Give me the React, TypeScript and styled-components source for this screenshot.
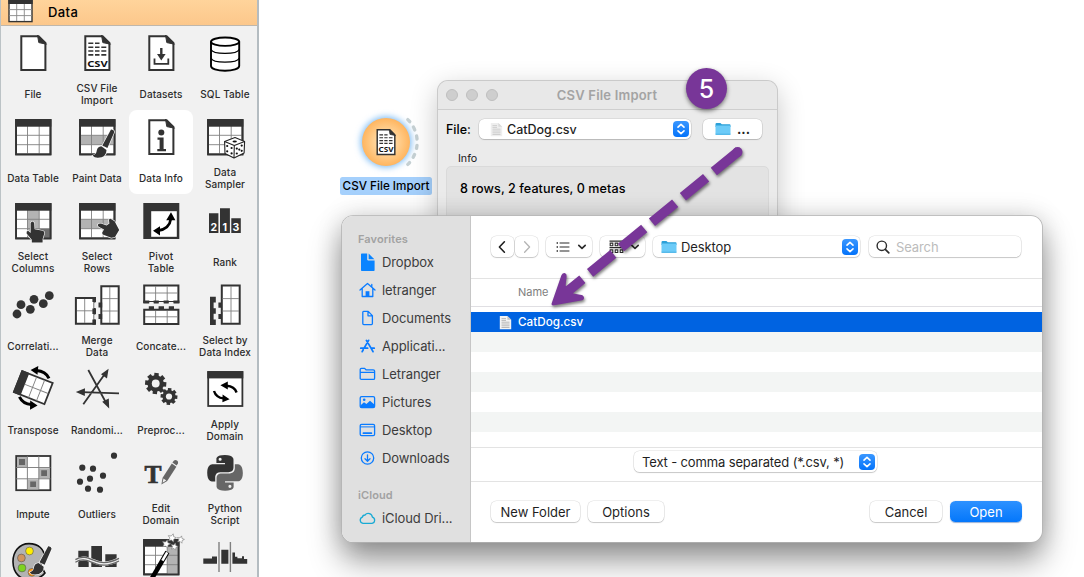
import React from "react";
import styled, { createGlobalStyle, css } from "styled-components";

const INK = "#333333";
const PURPLE = "#783698";
const BLUE = "#0a7bff";

const GlobalStyle = createGlobalStyle`
  *, *::before, *::after { box-sizing: border-box; }
  html, body { margin: 0; padding: 0; background: #ffffff; }
  body {
    font-family: Inter, "Liberation Sans", sans-serif;
    color: #1c1c1c;
    overflow: hidden;
  }
  svg { display: block; flex: none; }
`;

/* ---------- page ---------- */

const Page = styled.div`
  display: flex;
  width: 1084px;
  height: 577px;
  overflow: hidden;
  background: #ffffff;
`;

const Toolbox = styled.aside`
  flex: none;
  width: 259px;
  height: 577px;
  overflow: hidden;
  background: #f1f1f1;
  border-left: 1px solid #bcc3c6;
  border-right: 2px solid #b4bcc1;
`;

const ToolboxHeader = styled.header`
  display: flex;
  align-items: center;
  height: 26px;
  padding: 0 0 2px 7px;
  gap: 15px;
  background: linear-gradient(#ffd49b, #fcc78b);
  border-bottom: 1px solid #bfb7ac;
  font-size: 13px;
  font-weight: 500;
  letter-spacing: 0.4px;
  color: #000000;
`;

const HeaderIcon = styled.svg`
  width: 25px;
  height: 26px;
  margin-top: 1px;
`;

const TileGrid = styled.div`
  display: grid;
  grid-template-columns: repeat(4, 64px);
  grid-auto-rows: 84px;
`;

const Tile = styled.div<{ $active?: boolean }>`
  display: flex;
  flex-direction: column;
  align-items: center;
  border-radius: 8px;
  background: ${(p) => (p.$active ? "#ffffff" : "transparent")};
`;

const TileIcon = styled.svg`
  flex: none;
  width: 64px;
  height: 52px;
  overflow: visible;
`;

const TileLabel = styled.div`
  display: flex;
  align-items: center;
  justify-content: center;
  height: 32px;
  font-size: 10px;
  font-weight: 500;
  line-height: 12px;
  letter-spacing: 0.1px;
  text-align: center;
  white-space: pre;
  color: #2c2c2c;
`;

/* ---------- canvas ---------- */

const Canvas = styled.main`
  position: relative;
  flex: 1;
  overflow: hidden;
`;

const NodeBox = styled.div`
  position: absolute;
  left: 81px;
  top: 112px;
  width: 92px;
  display: flex;
  flex-direction: column;
  align-items: center;
  gap: 5px;
`;

const NodeArt = styled.svg`
  width: 92px;
  height: 60px;
  overflow: visible;
`;

const NodeLabel = styled.div`
  width: 92px;
  height: 18px;
  border-radius: 2.5px;
  background: #a5d0fc;
  font-size: 11.7px;
  font-weight: 500;
  line-height: 19px;
  text-align: center;
  white-space: nowrap;
  color: #000000;
`;

/* ---------- shared controls ---------- */

const Control = styled.div<{ $w: number; $h?: number; $primary?: boolean; $pad?: number; $center?: boolean }>`
  display: flex;
  flex: none;
  align-items: center;
  width: ${(p) => p.$w}px;
  height: ${(p) => p.$h ?? 21}px;
  padding: 0 ${(p) => p.$pad ?? 0}px;
  border-radius: 5.5px;
  background: #ffffff;
  box-shadow: 0 0 0 0.6px rgba(0, 0, 0, 0.13), 0 1px 1px rgba(0, 0, 0, 0.17);
  font-size: 13px;
  white-space: nowrap;
  color: #1f1f1f;
  ${(p) => p.$center && css`justify-content: center;`}
  ${(p) =>
    p.$primary &&
    css`
      background: linear-gradient(#2d91ff, #0477fb);
      box-shadow: 0 0.5px 1px rgba(0, 60, 150, 0.4);
      color: #ffffff;
    `}
`;

const ControlText = styled.span<{ $ls?: number; $weight?: number; $size?: number; $hint?: boolean }>`
  flex: 1;
  font-size: ${(p) => p.$size ?? 13}px;
  font-weight: ${(p) => p.$weight ?? 400};
  letter-spacing: ${(p) => p.$ls ?? 0}px;
  ${(p) => p.$hint && css`color: #bcbcbc;`}
`;

const StepperBox = styled.span`
  display: flex;
  flex: none;
  align-items: center;
  justify-content: center;
  width: 16px;
  height: 16px;
  border-radius: 4px;
  background: linear-gradient(#3a97ff, #0473fa);
`;

const Stepper = () => (
  <StepperBox>
    <svg width="16" height="16" viewBox="0 0 16 16" fill="none" stroke="#fff" strokeWidth="1.6" strokeLinecap="round" strokeLinejoin="round">
      <path d="M5 6.2 8 3.4l3 2.8M5 9.8l3 2.8 3-2.8" />
    </svg>
  </StepperBox>
);

const FolderArt = () => (
  <svg width="16" height="14" viewBox="0 0 16 14">
    <path d="M0.5 2.2Q0.5 1 1.6 1H5.4L6.8 2.3H14.6Q15.5 2.3 15.5 3.2V5H.5Z" fill="#2ba0d8" />
    <rect x="0.5" y="3.6" width="15" height="9.4" rx="0.9" fill="#6ccbf8" />
    <path d="M.5 12.2h15" stroke="#4bb0e2" strokeWidth="0.9" />
  </svg>
);

const PaperArt = ({ dim }: { dim?: boolean }) => (
  <svg width="13" height="15" viewBox="0 0 13 15" opacity={dim ? 0.65 : 1}>
    <path d="M.8 1H8.4L12.2 4.8V14.2H.8Z" fill={dim ? "#e6e6e6" : "#f4f4f4"} />
    <path d="M8.4 1V4.8H12.2Z" fill="#c5c5c5" />
    <path d="M2.5 3.6H7M2.5 5.4H7M2.5 7.2h8M2.5 9h8M2.5 10.8h8M2.5 12.5h8" stroke="#a9a9a9" strokeWidth="0.8" />
  </svg>
);

/* ---------- CSV import window ---------- */

const ImportWindow = styled.section`
  position: absolute;
  left: 179px;
  top: 81px;
  width: 339px;
  height: 300px;
  border-radius: 10px;
  background: #ebebeb;
  box-shadow: 0 0 0 1px #cacaca, 0 8px 28px rgba(0, 0, 0, 0.24);
`;

const TitleBar = styled.div`
  display: flex;
  align-items: center;
  height: 29px;
  padding: 0 8px;
  border-bottom: 1px solid #cecece;
  border-radius: 10px 10px 0 0;
  background: #e8e8e8;
`;

const Lights = styled.div`
  display: flex;
  flex: none;
  gap: 8px;
`;

const Light = styled.i`
  width: 12px;
  height: 12px;
  border: 1px solid #bfbfbf;
  border-radius: 50%;
  background: #cecece;
`;

const WindowTitle = styled.div`
  flex: 1;
  padding-right: 53px;
  font-size: 13px;
  font-weight: 600;
  letter-spacing: 0.2px;
  line-height: 18px;
  text-align: center;
  white-space: nowrap;
  color: #a3a3a3;
`;

const FileRow = styled.div`
  display: flex;
  align-items: center;
  gap: 8px;
  height: 20px;
  margin: 9px 15px 0 8px;
  font-size: 12.5px;
  font-weight: 500;
  color: #000000;
`;

const FileLabel = styled.span`
  width: 25px;
  white-space: nowrap;
`;

const Dots = styled.span`
  padding-left: 6px;
  font-weight: 700;
`;

const GroupTitle = styled.div`
  margin: 12px 0 0 20px;
  height: 15px;
  font-size: 10.7px;
  line-height: 15px;
  color: #1a1a1a;
`;

const GroupBox = styled.div`
  margin: 0 8px 0 8px;
  height: 180px;
  padding: 14px 0 0 13px;
  border: 1px solid #dadada;
  border-radius: 5px;
  background: #e3e3e3;
  font-size: 12.6px;
  font-weight: 500;
  line-height: 16px;
  letter-spacing: 0.06px;
  color: #000000;
`;

/* ---------- open dialog ---------- */

const OpenDialog = styled.section`
  position: absolute;
  left: 83px;
  top: 216px;
  display: flex;
  width: 700px;
  height: 326px;
  border-radius: 11px;
  background: #ffffff;
  box-shadow: 0 0 0 0.8px #b4b4b4, 0 18px 32px rgba(0, 0, 0, 0.42), 0 0 26px rgba(0, 0, 0, 0.15);
`;

const Places = styled.nav`
  flex: none;
  width: 129px;
  padding: 15px 0 0 16px;
  border-right: 1px solid #c6c6c6;
  border-radius: 11px 0 0 11px;
  background: #e0e0e0;
`;

const PlacesTitle = styled.div<{ $gap?: number }>`
  height: 17px;
  margin-top: ${(p) => p.$gap ?? 0}px;
  font-size: 11px;
  font-weight: 600;
  line-height: 17px;
  letter-spacing: 0.1px;
  color: #a2a2a2;
`;

const Place = styled.div`
  display: flex;
  align-items: center;
  gap: 6px;
  height: 28px;
  font-size: 13px;
  letter-spacing: -0.1px;
  white-space: nowrap;
  color: #3c3c3c;
`;

const PlaceIcon = styled.svg`
  width: 18px;
  height: 18px;
`;

const Browser = styled.div`
  display: flex;
  flex: 1;
  flex-direction: column;
  min-width: 0;
`;

const Toolbar = styled.div`
  display: flex;
  flex: none;
  height: 63px;
  padding: 20px 0 0 20px;
  border-bottom: 1px solid #e3e3e3;
`;

const Slot = styled.div<{ $ml: number }>`
  margin-left: ${(p) => p.$ml}px;
`;

const ColumnHead = styled.div`
  flex: none;
  height: 28px;
  padding: 0 0 0 47px;
  border-bottom: 1px solid #e0dfe3;
  font-size: 11px;
  line-height: 27px;
  color: #7e7e7e;
`;

const FileList = styled.div`
  flex: none;
  height: 141px;
  padding-top: 5px;
  border-bottom: 1px solid #e3e3e3;
`;

const ListRow = styled.div<{ $tone: "selected" | "odd" | "even" }>`
  display: flex;
  align-items: center;
  gap: 6px;
  height: 20px;
  padding-left: 28px;
  font-size: 11.7px;
  font-weight: 500;
  color: #ffffff;
  background: ${(p) => ({ selected: "#0063e1", odd: "#f3f5f4", even: "#ffffff" })[p.$tone]};
`;

const FilterBar = styled.div`
  display: flex;
  flex: none;
  align-items: flex-start;
  height: 34px;
  padding: 3px 0 0 163px;
  border-bottom: 1px solid #e3e3e3;
`;

const Footer = styled.div`
  display: flex;
  padding: 19px 20px 0 20px;
`;

const Spacer = styled.div`
  flex: 1;
`;

/* ---------- annotations ---------- */

const StepBadge = styled.div`
  position: absolute;
  left: 427px;
  top: 68px;
  width: 41px;
  height: 41px;
  border-radius: 50%;
  background: ${PURPLE};
  box-shadow: 0 2px 4px rgba(0, 0, 0, 0.5);
  font-size: 25px;
  font-weight: 500;
  line-height: 42px;
  text-align: center;
  color: #ffffff;
`;

const ArrowLayer = styled.svg`
  position: absolute;
  left: 0;
  top: 0;
  filter: drop-shadow(1px 2px 1.5px rgba(0, 0, 0, 0.5));
`;

/* ---------- toolbox icons: each is drawn in a 64 x 52 tile area ---------- */

const Doc = ({ children }: { children?: React.ReactNode }) => (
  <>
    <path d="M20.3 10.2H37.6L44.4 17V44H20.3Z" fill="#fff" stroke={INK} strokeWidth="2" />
    <path d="M36.5 9.2 45.4 18.2 37.8 16.6Z" fill={INK} stroke={INK} strokeWidth="1" />
    {children}
  </>
);

const CsvLines = () => (
  <>
    <path
      d="M23.3 17.3h5M30 17.3h4.5M23.3 21.2h5M30 21.2h4.5M36.3 21.2h5M23.3 25h5M30 25h4.5M36.3 25h5M23.3 28.9h5M30 28.9h4.5M36.3 28.9h5"
      stroke={INK}
      strokeWidth="1.6"
    />
    <text x="32.4" y="41.3" fontFamily="'Noto Sans', sans-serif" fontSize="9.4" fontWeight="700" textAnchor="middle" textLength="20.5" lengthAdjust="spacingAndGlyphs" fill="#111">
      CSV
    </text>
  </>
);

const Table = ({ children }: { children?: React.ReactNode }) => (
  <>
    <rect x="15.1" y="10" width="34.4" height="34.4" fill="#fff" stroke={INK} strokeWidth="1.8" />
    {children}
    <path d="M26.5 16V44M38.2 16V44M15 25.3H49.5M15 34.7H49.5" stroke="#808080" strokeWidth="0.9" />
    <rect x="14.3" y="9.2" width="36" height="7.5" fill={INK} />
    <rect x="15.1" y="10" width="34.4" height="34.4" fill="none" stroke={INK} strokeWidth="1.8" />
  </>
);

const Brush = ({ dx = 0, dy = 0 }: { dx?: number; dy?: number }) => (
  <g transform={`translate(${dx} ${dy})`} stroke="#fff" strokeWidth="1.2" paintOrder="stroke" fill={INK}>
    <path d="M46 19.5Q49 19.3 49.4 22L42.4 38 37.3 35.4Z" />
    <path d="M36.3 36.3 41.5 40Q41.5 47.5 33 47.8 29.5 48 27.5 45.6 31.5 44.5 31.8 40.5 32.5 36.6 36.3 36.3Z" />
  </g>
);

const Gear = ({ cx, cy, r }: { cx: number; cy: number; r: number }) => (
  <g transform={`translate(${cx} ${cy})`}>
    {[0, 45, 90, 135].map((a) => (
      <rect key={a} x={-r * 0.21} y={-r} width={r * 0.42} height={r * 2} fill={INK} transform={`rotate(${a + 5})`} />
    ))}
    <circle r={r * 0.78} fill={INK} />
    <circle r={r * 0.37} fill="#f1f1f1" />
  </g>
);

const star = (cx: number, cy: number, r: number) =>
  Array.from({ length: 10 }, (_, i) => {
    const a = (Math.PI / 5) * i - 1.3;
    const q = i % 2 ? r * 0.48 : r;
    return `${(cx + q * Math.cos(a)).toFixed(1)},${(cy + q * Math.sin(a)).toFixed(1)}`;
  }).join(" ");

const icons: Record<string, React.ReactNode> = {
  file: <Doc />,
  csv: (
    <Doc>
      <CsvLines />
    </Doc>
  ),
  datasets: (
    <Doc>
      <path d="M32.3 22V29" stroke={INK} strokeWidth="2.4" />
      <path d="M28 28H36.6L32.3 34.6Z" fill={INK} />
      <path d="M25.5 32.5V37.8H39.3V32.5" fill="none" stroke={INK} strokeWidth="1.8" />
    </Doc>
  ),
  sql: (
    <g fill="#fff" stroke="#000" strokeWidth="1.9">
      <path d="M18 15.5V40C18 42.6 24 44.8 32 44.8S46.2 42.6 46.2 40V15.5" />
      <path d="M18 23.5C19 26 25 27.4 32 27.4S45.2 26 46.2 23.5M18 32.2C19 34.7 25 36.1 32 36.1S45.2 34.7 46.2 32.2" fill="none" strokeWidth="1.2" />
      <ellipse cx="32.1" cy="15.7" rx="14.1" ry="4.2" />
    </g>
  ),
  table: <Table />,
  paint: (
    <>
      <Table>
        <rect x="15.5" y="25.3" width="34" height="9.4" fill="#b3b3b3" />
      </Table>
      <Brush />
    </>
  ),
  info: (
    <Doc>
      <circle cx="32.3" cy="22.6" r="3" fill={INK} />
      <path d="M28.5 27.6H34.6V39H37V41.2H28.3V39H30.6V29.8H28.5Z" fill={INK} />
    </Doc>
  ),
  sampler: (
    <>
      <Table />
      <g fill="#fff" stroke="#222" strokeWidth="1.1" strokeLinejoin="round">
        <path d="M42 27.6 51.6 31.6 51.1 43 41 48 32 43.4 31.6 31.4Z" />
        <path d="M31.6 31.4 41.3 35.6 51.6 31.6M41.3 35.6 41 48" fill="none" />
      </g>
      <g fill="#111">
        <ellipse cx="41.7" cy="31.5" rx="2.2" ry="1.1" />
        <circle cx="34.2" cy="36" r="1.1" />
        <circle cx="38.6" cy="38" r="1.1" />
        <circle cx="34.2" cy="41.3" r="1.1" />
        <circle cx="38.6" cy="43.4" r="1.1" />
        <circle cx="43.8" cy="38.6" r="1.1" />
        <circle cx="48.7" cy="35.6" r="1.1" />
        <circle cx="46.3" cy="39.6" r="1.1" />
        <circle cx="43.8" cy="43.5" r="1.1" />
        <circle cx="48.7" cy="40.8" r="1.1" />
      </g>
    </>
  ),
  selcols: (
    <>
      <Table>
        <rect x="26.5" y="16" width="11.7" height="28" fill="#b3b3b3" />
        <rect x="38.2" y="34.7" width="11" height="9.7" fill="#6e6e6e" />
      </Table>
      <path
        d="M29.6 29Q31.4 26 33.2 29L33.6 35.3 41.8 36.8Q43.6 37.4 43.3 39.4L41.6 45V48.4H30.8V45.8L25.6 39.4Q25.2 36.6 27.4 37L29.6 39Z"
        fill={INK}
        stroke="#fff"
        strokeWidth="1.2"
        paintOrder="stroke"
      />
    </>
  ),
  selrows: (
    <>
      <Table>
        <rect x="15.5" y="25.3" width="34" height="9.4" fill="#b3b3b3" />
      </Table>
      <path
        d="M33.6 29.8Q31.7 31.6 34.2 33L39 35.4 37.2 38.6Q36.8 40.8 39 41L46.2 43.8 49.8 43.2 54.2 36 49.6 27.2 45.5 24.8Q43.8 24.6 44 26.4L44.4 29.4 41.6 31.6 36 29.6Z"
        fill={INK}
        stroke="#fff"
        strokeWidth="1.2"
        paintOrder="stroke"
      />
    </>
  ),
  pivot: (
    <>
      <rect x="14.3" y="9" width="36" height="36" fill={INK} />
      <rect x="22.2" y="17.2" width="25.6" height="25.6" fill="#fff" />
      <path d="M29 36.6Q40.5 35 41.8 25" fill="none" stroke="#000" strokeWidth="2.6" />
      <path d="M24 36.8 31 32.2V41.4ZM42 18.2 46.4 26.2H37.2Z" fill="#000" />
    </>
  ),
  rank: (
    <>
      <path d="M16 19.2H25.4V39H16ZM27 14.2H36.9V39H27ZM38.3 24.2H47.8V39H38.3Z" fill={INK} />
      <g fill="#fff" fontFamily="Inter, sans-serif" fontSize="10.5" fontWeight="700" textAnchor="middle">
        <text x="20.8" y="36.6">2</text>
        <text x="31.8" y="36.6">1</text>
        <text x="43" y="36.6">3</text>
      </g>
    </>
  ),
  corr: (
    <g fill={INK}>
      {[[16, 36], [20, 26.7], [29.3, 31.3], [33, 21.3], [42.3, 25.7], [48.3, 17.7]].map(([x, y]) => (
        <circle key={x} cx={x} cy={y} r="4.4" />
      ))}
    </g>
  ),
  merge: (
    <>
      <path d="M10.9 20H29.5V45.7H10.9ZM36.3 8.3H53.7V45.7H36.3Z" fill="#fff" stroke={INK} strokeWidth="2" />
      <path d="M19.7 21V45M12 32.8H28M44.8 9V45M37 20.6H53M37 33H53" stroke="#808080" strokeWidth="0.9" />
      <path d="M27.4 19H31V24H27.4ZM27.4 30.6H31V36H27.4ZM27.4 41.6H31V46.7H27.4ZM33.5 24.6H37.2V29.6H33.5ZM33.5 36H37.2V41H33.5Z" fill={INK} />
      <path d="M29.2 24.6H31V30H29.2ZM29.2 36.4H31V41.2H29.2Z" fill="#f1f1f1" />
    </>
  ),
  concat: (
    <>
      <path d="M15.2 7.4H49.4V24H15.2ZM15.2 31.7H49.4V46H15.2Z" fill="#fff" stroke={INK} strokeWidth="2" />
      <path d="M26.6 8V23M38.2 8V23M16 15H49M26.6 33V45M38.2 33V45M16 38.8H49" stroke="#808080" strokeWidth="0.9" />
      <path d="M14.3 22.4H20.3V25.6H14.3ZM24.6 22.4H29.8V25.6H24.6ZM34.6 22.4H39.8V25.6H34.6ZM44.4 22.4H50.4V25.6H44.4ZM19.8 28.2H25V32H19.8ZM29.6 28.2H35V32H29.6ZM39.8 28.2H45V32H39.8Z" fill={INK} />
      <path d="M20.3 24H24.6V25.6H20.3ZM29.8 24H34.6V25.6H29.8ZM39.8 24H44.4V25.6H39.8Z" fill="#f1f1f1" />
    </>
  ),
  selindex: (
    <>
      <path d="M17 18.7H22.8V24.4H20.6V30.2H22.8V35.8H20.6V41.4H22.8V47H17Z" fill={INK} />
      <path d="M28.8 7.4H46.7V45.8H28.8Z" fill="#fff" stroke={INK} strokeWidth="2" />
      <path d="M38 8V45M29.5 20.6H46M29.5 33H46" stroke="#808080" strokeWidth="0.9" />
      <path d="M25.4 24.6H29V29.8H25.4ZM25.4 36H29V41H25.4Z" fill={INK} />
    </>
  ),
  transpose: (
    <>
      <g transform="translate(32.3 25.6) rotate(21.5)">
        <rect x="-16.4" y="-11.3" width="32.8" height="22.6" fill="#fff" stroke={INK} strokeWidth="1.8" />
        <rect x="-17.2" y="-12.1" width="8.2" height="24.2" fill={INK} />
        <path d="M-.8-11V11M7.8-11V11M-9 0H16" stroke="#808080" strokeWidth="0.9" />
      </g>
      <path d="M48 16.3Q44.5 9.3 35.5 8.6M18.4 34.8Q22 42 30.4 42.6" fill="none" stroke="#000" strokeWidth="3" />
      <path d="M29.6 8 37.3 4 36.5 12.8ZM36.6 43.6 29.2 38.6 29 47.8Z" fill="#000" />
    </>
  ),
  random: (
    <>
      <path d="M23.3 8 41.2 41M18.3 42.3 40 11.8M54 31.3 17 30.2" stroke={INK} strokeWidth="1.8" />
      <path d="M44.2 46.5 37.2 39.8 43.8 36.6ZM43.6 6.8 42 16.4 36 12.2ZM10.8 30 20 26.2 19.8 34Z" fill={INK} />
    </>
  ),
  gears: (
    <>
      <Gear cx={26.7} cy={21.5} r={10.6} />
      <Gear cx={40} cy={34.5} r={8.4} />
    </>
  ),
  apply: (
    <>
      <rect x="15.2" y="10" width="34.2" height="34" fill="#fff" stroke={INK} strokeWidth="1.8" />
      <rect x="14.3" y="9.2" width="36" height="7.2" fill={INK} />
      <path d="M43.6 30.5Q41.5 24.4 33.6 23.8M21 29Q23 35.6 30.6 36.4" fill="none" stroke="#000" strokeWidth="2.4" />
      <path d="M27.4 23.2 34.8 19.6V27.6ZM36.6 37.2 29.6 32.4 29.4 40.2Z" fill="#000" />
    </>
  ),
  impute: (
    <>
      <rect x="15.2" y="10" width="34.2" height="34.2" fill="#fff" stroke={INK} strokeWidth="1.8" />
      <path d="M16 11H26V21H16ZM38 22.3H48.6V32.4H38ZM26.6 33.4H37.4V43.4H26.6Z" fill="#b3b3b3" />
      <path d="M18 13H24V19H18ZM40.2 24.2H46V30H40.2ZM29.2 35.4H35V41H29.2Z" fill="#666" />
      <path d="M26.4 10V44M37.8 10V44M15 21.5H49.5M15 32.8H49.5" stroke="#777" strokeWidth="0.9" />
    </>
  ),
  outliers: (
    <g fill={INK}>
      {[[17.3, 21.7], [28, 22.7], [38, 29.7], [25, 32.7], [15, 35.7], [23, 42.7], [35, 43.7], [49, 9.7]].map(([x, y]) => (
        <circle key={x} cx={x} cy={y} r="3.1" />
      ))}
    </g>
  ),
  edit: (
    <>
      <text x="24" y="37.3" fontFamily="'Liberation Serif', serif" fontSize="25.5" fontWeight="700" textAnchor="middle" fill={INK} stroke={INK} strokeWidth="0.7">
        T
      </text>
      <path d="M32.4 38.6 33.6 31.8 42.8 17.6 47.4 20.8 38.2 35Z" fill="#666" />
      <path d="M34.5 32.5 37.3 34.4 33.6 36.8Z" fill="#eee" />
      <path d="M43.4 16.6 45 14.4Q46.6 13.4 48 14.6 49.6 15.8 49 17.4L47.6 19.4Z" fill="#666" />
    </>
  ),
  python: (
    <g transform="translate(14.2 9) scale(1.485)">
      <path
        d="M11.9 0C5.8 0 6.2 2.65 6.2 2.65V5.4H12v.85H3.9S0 5.8 0 11.95s3.4 5.9 3.4 5.9h2V15s-.1-3.4 3.35-3.4h5.75s3.2.05 3.2-3.1V3.2S18.2 0 11.9 0ZM8.7 1.85a1.04 1.04 0 1 1 0 2.08 1.04 1.04 0 0 1 0-2.08Z"
        fill={INK}
        fillRule="evenodd"
      />
      <path
        d="M12.1 24c6.1 0 5.7-2.65 5.7-2.65V18.6H12v-.85h8.1s3.9.45 3.9-5.7-3.4-5.9-3.4-5.9h-2V9s.1 3.4-3.35 3.4H9.5s-3.2-.05-3.2 3.1v5.3S5.8 24 12.1 24Zm3.2-1.85a1.04 1.04 0 1 1 0-2.08 1.04 1.04 0 0 1 0 2.08Z"
        fill="#666"
        fillRule="evenodd"
      />
    </g>
  ),
  palette: (
    <>
      <path
        d="M28 13.6C18 13.6 11.8 22 12 32 12.2 43 19 49.5 28 49.5 35 49.5 40 48 44 43 40 36 38 33 43.5 28.5 44 19 37 13.6 28 13.6Z"
        fill="#b3b3b3"
        stroke="#111"
        strokeWidth="1.6"
      />
      <circle cx="28.5" cy="21" r="3.9" fill="#ffee00" stroke="#555" strokeWidth=".6" />
      <circle cx="20.4" cy="28" r="3.9" fill="#cf9460" stroke="#555" strokeWidth=".6" />
      <circle cx="21" cy="38" r="3.9" fill="#7ed321" stroke="#555" strokeWidth=".6" />
      <circle cx="31" cy="42.3" r="3.9" fill="#ff9a1a" stroke="#555" strokeWidth=".6" />
      <Brush dx={1.2} dy={-3.2} />
    </>
  ),
  discretize: (
    <>
      <path d="M13.3 20.8H23.7V37H13.3ZM26.3 16H37V37H26.3ZM40.3 24.2H51.6V37H40.3Z" fill={INK} />
      <path d="M10.4 30.8C18 26 24 29.5 31 32.2S46 33.5 54 29.4" fill="none" stroke="#f1f1f1" strokeWidth="4" />
      <path d="M10.4 29.6C18 25 24 28.5 31 31.2S46 32.5 54 28.4M10.4 32.2C18 27.6 24 31.1 31 33.8S46 35.1 54 31" fill="none" stroke="#666" strokeWidth="1.3" />
    </>
  ),
  wand: (
    <>
      <Table>
        <rect x="38.2" y="16" width="11.2" height="28" fill="#b3b3b3" />
      </Table>
      <path d="M22 50 38.4 22" stroke="#000" strokeWidth="4.6" />
      <path d="M33.4 30.6 38.2 22.4" stroke="#fff" strokeWidth="2.6" />
      <g fill="#fff" stroke="#777" strokeWidth=".6">
        <polygon points={star(43, 8, 4.4)} />
        <polygon points={star(37.2, 14, 4.4)} />
        <polygon points={star(51.6, 9.6, 3.8)} />
        <polygon points={star(45.4, 16.6, 3.8)} />
      </g>
    </>
  ),
  continuize: (
    <>
      <path d="M10.3 28.6H19V26.4H24V33.8H10.3ZM28.3 19.8H35.4V33.8H28.3ZM39.4 22.6H42V26.8H44.4V28.2H49V26.2H51V29H54.2V33.8H39.4Z" fill={INK} />
      <path d="M26 12V42M37.4 12V42" stroke="#808080" strokeWidth="1.4" />
    </>
  ),
};

const tools: { icon: string; label: string; active?: boolean }[] = [
  { icon: "file", label: "File" },
  { icon: "csv", label: "CSV File\nImport" },
  { icon: "datasets", label: "Datasets" },
  { icon: "sql", label: "SQL Table" },
  { icon: "table", label: "Data Table" },
  { icon: "paint", label: "Paint Data" },
  { icon: "info", label: "Data Info", active: true },
  { icon: "sampler", label: "Data\nSampler" },
  { icon: "selcols", label: "Select\nColumns" },
  { icon: "selrows", label: "Select\nRows" },
  { icon: "pivot", label: "Pivot\nTable" },
  { icon: "rank", label: "Rank" },
  { icon: "corr", label: "Correlati..." },
  { icon: "merge", label: "Merge\nData" },
  { icon: "concat", label: "Concate..." },
  { icon: "selindex", label: "Select by\nData Index" },
  { icon: "transpose", label: "Transpose" },
  { icon: "random", label: "Randomi..." },
  { icon: "gears", label: "Preproc..." },
  { icon: "apply", label: "Apply\nDomain" },
  { icon: "impute", label: "Impute" },
  { icon: "outliers", label: "Outliers" },
  { icon: "edit", label: "Edit\nDomain" },
  { icon: "python", label: "Python\nScript" },
  { icon: "palette", label: "" },
  { icon: "discretize", label: "" },
  { icon: "wand", label: "" },
  { icon: "continuize", label: "" },
];

/* ---------- places icons, 18 x 18 ---------- */

const stroke = { fill: "none", stroke: BLUE, strokeWidth: 1.3, strokeLinejoin: "round" as const, strokeLinecap: "round" as const };

const favorites: { name: string; art: React.ReactNode }[] = [
  {
    name: "Dropbox",
    art: (
      <g fill="#0a84ff">
        <path d="M3 1.2Q3 .4 3.8.4H9.2V6.6Q9.2 7.4 10 7.4H16.6V17.2Q16.6 18 15.8 18H3.8Q3 18 3 17.2Z" />
        <path d="M10.6.6 16.4 6.2H10.6Z" />
      </g>
    ),
  },
  {
    name: "letranger",
    art: (
      <>
        <path d="M2 9 9.5 2.4 17 9M4.2 7.5V15.5H14.8V7.5M13.8 5.8V3.4" {...stroke} />
        <path d="M7.6 10.2H11.4V15.5H7.6Z" fill={BLUE} />
      </>
    ),
  },
  {
    name: "Documents",
    art: <path d="M4.8 3.2Q4.8 2.4 5.6 2.4H10.2L14.4 6.6V14.6Q14.4 15.6 13.4 15.6H5.8Q4.8 15.6 4.8 14.6ZM10 2.6V6.8H14.2" {...stroke} />,
  },
  {
    name: "Applicati...",
    art: (
      <path
        d="M8.4 3.4 13.2 11.4 15 14.6M10.6 3.4 6.4 10.6M5.2 12.8 4.2 14.6M2.8 11.2H9.6M13.2 11.2H16.2"
        {...stroke}
        strokeWidth={1.8}
      />
    ),
  },
  {
    name: "Letranger",
    art: <path d="M2.2 4.6Q2.2 3.4 3.4 3.4H6.6L8 4.8H15.2Q16.6 4.8 16.6 6V13.2Q16.6 14.4 15.4 14.4H3.4Q2.2 14.4 2.2 13.2ZM2.2 7.4H16.6" {...stroke} />,
  },
  {
    name: "Pictures",
    art: (
      <>
        <rect x="2.2" y="3.6" width="14.4" height="11" rx="1.4" {...stroke} />
        <path d="M2.6 12.2 6 9.2 8.4 11 12 7.8 16.4 11.4V14.4H2.6Z" fill={BLUE} />
        <circle cx="6.2" cy="6.8" r="1.3" fill={BLUE} />
      </>
    ),
  },
  {
    name: "Desktop",
    art: (
      <>
        <rect x="2.2" y="3.4" width="14.4" height="11.2" rx="1.4" {...stroke} />
        <path d="M2.4 5.9H16.4" {...stroke} strokeWidth={1} />
        <path d="M5.4 12.2H13.4" {...stroke} strokeWidth={1.7} />
      </>
    ),
  },
  {
    name: "Downloads",
    art: (
      <>
        <circle cx="9.5" cy="9" r="6.2" {...stroke} />
        <path d="M9.5 5.8V12M7 9.8 9.5 12.2 12 9.8" {...stroke} />
      </>
    ),
  },
];

const Chevron = () => (
  <svg width="10" height="8" viewBox="0 0 10 8" fill="none" stroke="#2a2a2a" strokeWidth="1.7" strokeLinecap="round" strokeLinejoin="round">
    <path d="M1.8 2.4 5 5.4 8.2 2.4" />
  </svg>
);

/* ---------- app ---------- */

export default function App() {
  return (
    <>
      <GlobalStyle />
      <Page>
        <Toolbox>
          <ToolboxHeader>
            <HeaderIcon viewBox="0 0 25 26">
              <rect x="1" y="1" width="23" height="21.6" fill="#fff" stroke={INK} strokeWidth="1.4" />
              <path d="M8.7 4V22M16.3 4V22M1 10.6H24M1 16.6H24" stroke="#888" strokeWidth=".9" />
              <rect x=".3" y="0" width="24.4" height="5" fill={INK} />
            </HeaderIcon>
            <span>Data</span>
          </ToolboxHeader>
          <TileGrid>
            {tools.map((t) => (
              <Tile key={t.icon} $active={t.active}>
                <TileIcon viewBox="0 0 64 52">{icons[t.icon]}</TileIcon>
                <TileLabel>{t.label}</TileLabel>
              </Tile>
            ))}
          </TileGrid>
        </Toolbox>

        <Canvas>
          <NodeBox>
            <NodeArt viewBox="0 0 92 60">
              <defs>
                <radialGradient id="node">
                  <stop offset="0" stopColor="#ffe3bd" />
                  <stop offset="0.5" stopColor="#ffd193" />
                  <stop offset="1" stopColor="#ffb55f" />
                </radialGradient>
                <filter id="glow" x="-50%" y="-50%" width="200%" height="200%">
                  <feGaussianBlur stdDeviation="3" />
                </filter>
              </defs>
              <circle cx="46" cy="30" r="25.5" fill="#7fbdf5" filter="url(#glow)" />
              <circle cx="46" cy="30" r="24" fill="url(#node)" />
              <path d="M67.8 7.6A31.5 31.5 0 0 1 67.8 52.4" fill="none" stroke="#c5d0d3" strokeWidth="3.4" strokeLinecap="round" strokeDasharray="3 6.4" />
              <g transform="translate(22.4 10.3) scale(0.73)">
                <Doc>
                  <CsvLines />
                </Doc>
              </g>
            </NodeArt>
            <NodeLabel>CSV File Import</NodeLabel>
          </NodeBox>

          <ImportWindow>
            <TitleBar>
              <Lights>
                <Light />
                <Light />
                <Light />
              </Lights>
              <WindowTitle>CSV File Import</WindowTitle>
            </TitleBar>
            <FileRow>
              <FileLabel>File:</FileLabel>
              <Control $w={212} $h={20} $pad={2}>
                <Slot $ml={9} />
                <PaperArt dim />
                <Slot $ml={4} />
                <ControlText $size={12.5} $weight={500}>CatDog.csv</ControlText>
                <Stepper />
              </Control>
              <Slot $ml={4}>
                <Control $w={59} $h={20} $center>
                  <FolderArt />
                  <Dots>...</Dots>
                </Control>
              </Slot>
            </FileRow>
            <GroupTitle>Info</GroupTitle>
            <GroupBox>8 rows, 2 features, 0 metas</GroupBox>
          </ImportWindow>

          <StepBadge>5</StepBadge>

          <OpenDialog>
            <Places>
              <PlacesTitle>Favorites</PlacesTitle>
              {favorites.map((f) => (
                <Place key={f.name}>
                  <PlaceIcon viewBox="0 0 18 18">{f.art}</PlaceIcon>
                  <span>{f.name}</span>
                </Place>
              ))}
              <PlacesTitle $gap={15}>iCloud</PlacesTitle>
              <Place>
                <PlaceIcon viewBox="0 0 18 18">
                  <path
                    d="M5 14.4A3.2 3.2 0 0 1 4.4 8.2 2.6 2.6 0 0 1 7 6 4.2 4.2 0 0 1 14.4 8.2 3.2 3.2 0 0 1 14 14.4Z"
                    {...stroke}
                    stroke="#18aad4"
                  />
                </PlaceIcon>
                <span>iCloud Dri...</span>
              </Place>
            </Places>

            <Browser>
              <Toolbar>
                <Control $w={23} $center>
                  <svg width="10" height="14" viewBox="0 0 10 14" fill="none" stroke="#1e1e1e" strokeWidth="1.6" strokeLinecap="round" strokeLinejoin="round">
                    <path d="M6.4 1.8 1.4 7 6.4 12.2" />
                  </svg>
                </Control>
                <Slot $ml={1}>
                  <Control $w={23} $center>
                    <svg width="10" height="14" viewBox="0 0 10 14" fill="none" stroke="#b4b4b4" strokeWidth="1.3" strokeLinecap="round" strokeLinejoin="round">
                      <path d="M2.6 1.8 7.6 7 2.6 12.2" />
                    </svg>
                  </Control>
                </Slot>
                <Slot $ml={8}>
                  <Control $w={46}>
                    <Slot $ml={10} />
                    <svg width="14" height="12" viewBox="0 0 14 12" stroke="#2a2a2a" strokeWidth="1.2">
                      <path d="M3.6 2H13.4M3.6 6H13.4M3.6 10H13.4" />
                      <path d="M.6 2H2M.6 6H2M.6 10H2" strokeWidth="1.5" />
                    </svg>
                    <Slot $ml={7} />
                    <Chevron />
                  </Control>
                </Slot>
                <Slot $ml={8}>
                  <Control $w={45}>
                    <Slot $ml={9} />
                    <svg width="15" height="14" viewBox="0 0 15 14" fill="none" stroke="#2a2a2a" strokeWidth="1.1">
                      <path d="M.5 1.1H14.5M.5 7.6H14.5" />
                      <path d="M1.2 3.1h2.6v2.6H1.2ZM6.2 3.1h2.6v2.6H6.2ZM11.2 3.1h2.6v2.6h-2.6ZM1.2 9.9h2.6v2.6H1.2ZM6.2 9.9h2.6v2.6H6.2ZM11.2 9.9h2.6v2.6h-2.6Z" />
                    </svg>
                    <Slot $ml={6} />
                    <Chevron />
                  </Control>
                </Slot>
                <Slot $ml={8}>
                  <Control $w={207} $pad={2}>
                    <Slot $ml={6} />
                    <FolderArt />
                    <Slot $ml={4} />
                    <ControlText $ls={-0.1}>Desktop</ControlText>
                    <Stepper />
                  </Control>
                </Slot>
                <Slot $ml={9}>
                  <Control $w={152} $pad={7}>
                    <svg width="14" height="14" viewBox="0 0 14 14" fill="none" stroke="#2c2c2c" strokeWidth="1.4" strokeLinecap="round">
                      <circle cx="5.8" cy="5.8" r="4.7" />
                      <path d="M9.3 9.3 12.8 12.8" strokeWidth="1.7" />
                    </svg>
                    <Slot $ml={6} />
                    <ControlText $ls={-0.1} $hint>Search</ControlText>
                  </Control>
                </Slot>
              </Toolbar>
              <ColumnHead>Name</ColumnHead>
              <FileList>
                <ListRow $tone="selected">
                  <PaperArt />
                  <span>CatDog.csv</span>
                </ListRow>
                <ListRow $tone="odd" />
                <ListRow $tone="even" />
                <ListRow $tone="odd" />
                <ListRow $tone="even" />
                <ListRow $tone="odd" />
              </FileList>
              <FilterBar>
                <Control $w={243} $pad={2}>
                  <Slot $ml={6} />
                  <ControlText $ls={-0.14}>Text - comma separated (*.csv, *)</ControlText>
                  <Stepper />
                </Control>
              </FilterBar>
              <Footer>
                <Control $w={89} $center>New Folder</Control>
                <Slot $ml={8}>
                  <Control $w={76} $center>Options</Control>
                </Slot>
                <Spacer />
                <Control $w={72} $center>Cancel</Control>
                <Slot $ml={8}>
                  <Control $w={72} $center $primary>Open</Control>
                </Slot>
              </Footer>
            </Browser>
          </OpenDialog>

          <ArrowLayer width="825" height="577" viewBox="259 0 825 577">
            <path
              d="M738.6 151.2 566 292.6"
              fill="none"
              stroke={PURPLE}
              strokeWidth="9.8"
              strokeDasharray="32 10 30 10 30 10 30 10 30 10 60"
            />
            <circle cx="737.6" cy="152" r="4.9" fill={PURPLE} />
            <path
              d="M551.6 303.4 561.4 275.2Q562.8 272.6 565.2 273.2 567 274 566.6 276.4L565.6 285.6 573.4 293.6 581.6 295Q584.4 296 584 298.6 583.6 300.6 581 300.6L553 305.4Q551.2 305.4 551.6 303.4Z"
              fill={PURPLE}
            />
          </ArrowLayer>
        </Canvas>
      </Page>
    </>
  );
}
